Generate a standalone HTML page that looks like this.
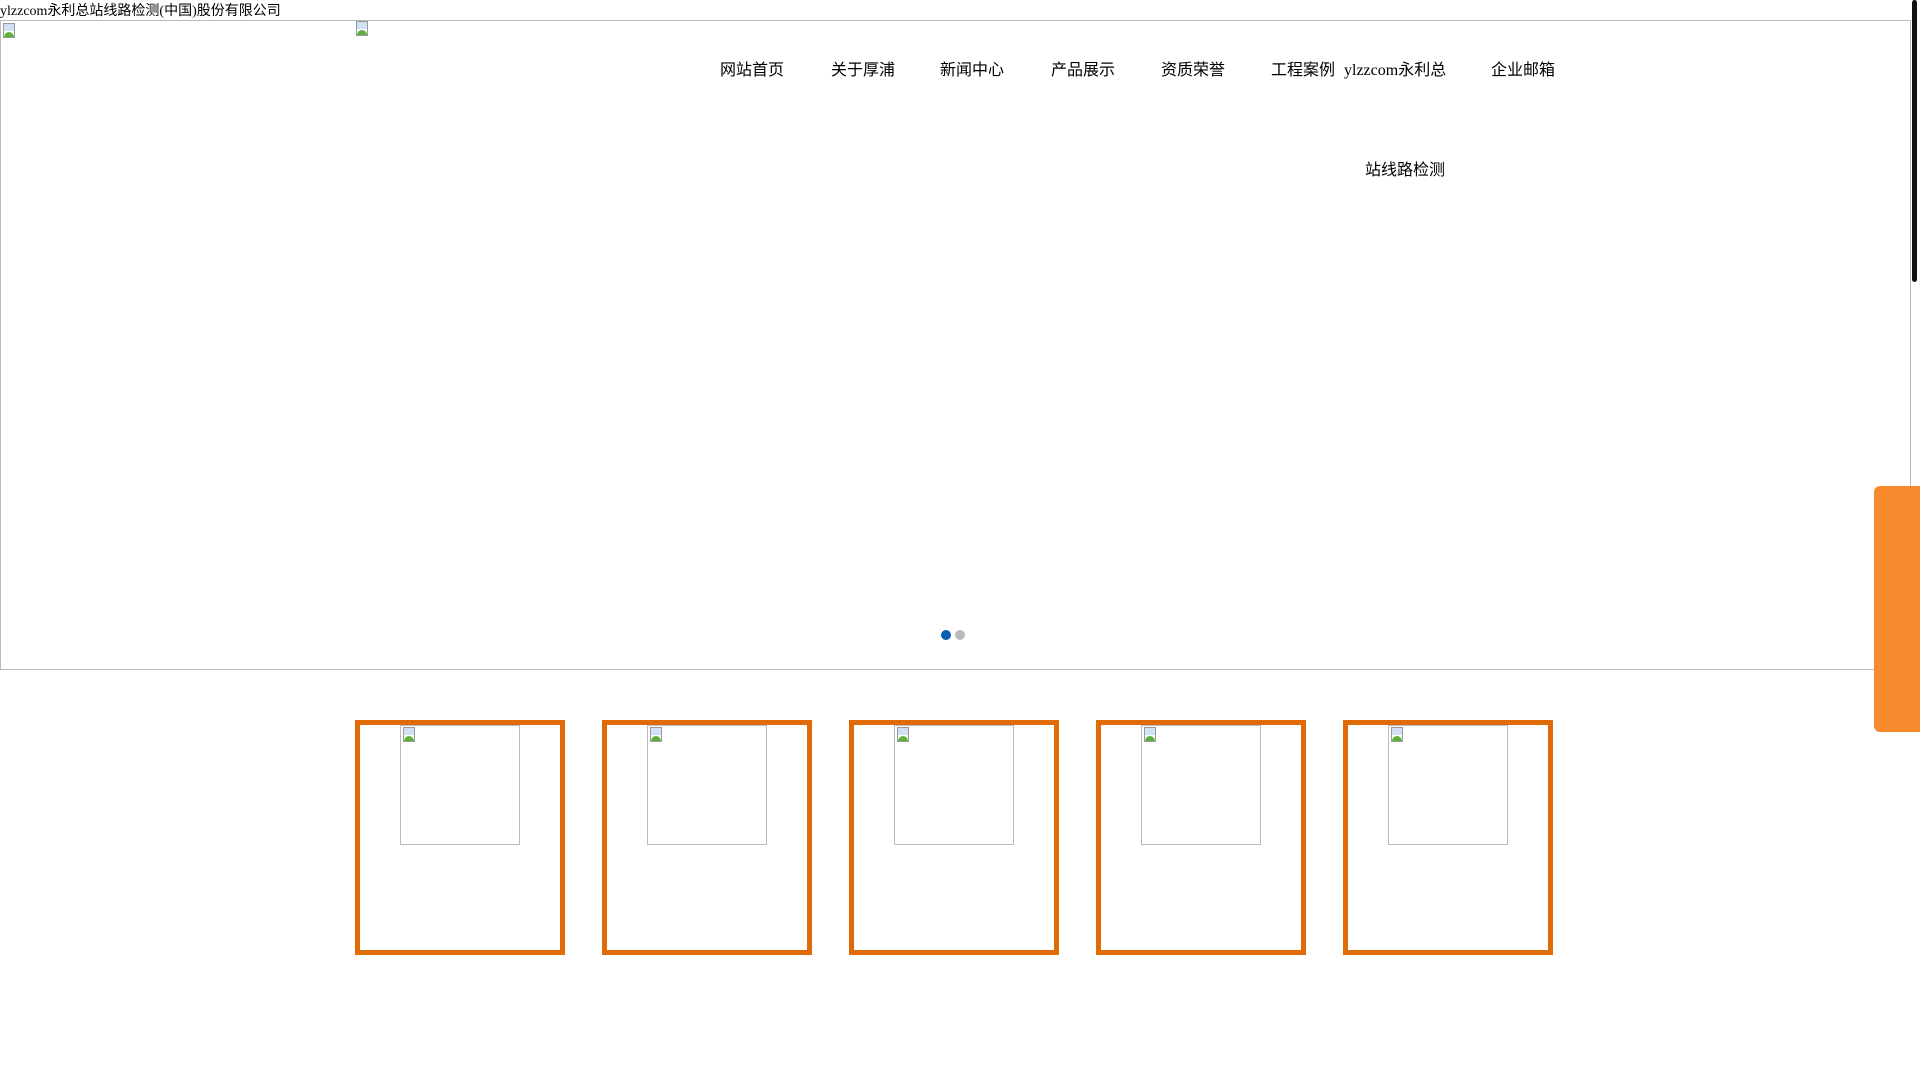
<!DOCTYPE html>
<html><head><meta charset="utf-8"><style>
*{margin:0;padding:0;box-sizing:border-box}
body{width:1920px;height:1080px;background:#fff;position:relative;overflow:hidden;font-family:"Liberation Serif","Noto Sans CJK SC",serif;color:#000}
.a{position:absolute}
.nav{font-size:16px;top:56px;white-space:nowrap}
.img{position:absolute;width:16px;height:16px}
.img i{position:absolute;left:1px;top:0;width:12px;height:15px;border:1px solid #999;background:linear-gradient(#cfe0f7 55%,#fff 55%)}
.img b{position:absolute;left:2px;top:9px;width:10px;height:5px;background:#5cb23a;border-radius:6px 6px 0 0}
.box{position:absolute;top:720px;width:210px;height:235px;border:5px solid #e06a05}
.inner{position:absolute;top:725px;width:120px;height:120px;border:1px solid #bbb;border-right-color:#bbb}
</style></head><body>
<div class="a" style="left:0;top:3px;font-size:14px;line-height:18px">ylzzcom永利总站线路检测(中国)股份有限公司</div>
<div class="a" style="left:0;top:20px;width:1911px;height:650px;border:1px solid #bbb"></div>
<div class="img" style="left:2px;top:23px"><i></i><b></b></div>
<div class="img" style="left:355px;top:21px"><i></i><b></b></div>
<div class="a nav" style="left:720px">网站首页</div>
<div class="a nav" style="left:831px">关于厚浦</div>
<div class="a nav" style="left:940px">新闻中心</div>
<div class="a nav" style="left:1051px">产品展示</div>
<div class="a nav" style="left:1161px">资质荣誉</div>
<div class="a nav" style="left:1271px">工程案例</div>
<div class="a nav" style="left:1344px">ylzzcom永利总</div>
<div class="a nav" style="left:1491px">企业邮箱</div>
<div class="a nav" style="left:1365px;top:156px">站线路检测</div>
<div class="a" style="left:941px;top:630px;width:10px;height:10px;border-radius:50%;background:#0a5bb5"></div>
<div class="a" style="left:955px;top:630px;width:10px;height:10px;border-radius:50%;background:#bbb"></div>
<div class="a" style="left:1874px;top:486px;width:46px;height:246px;background:#f78a2c;border-radius:6px 0 0 6px"></div>
<div class="a" style="left:1912px;top:0;width:5px;height:282px;background:#111;border-radius:3px"></div>

<div class="box" style="left:355px"></div><div class="inner" style="left:400px"></div><div class="img" style="left:402px;top:727px"><i></i><b></b></div>
<div class="box" style="left:602px"></div><div class="inner" style="left:647px"></div><div class="img" style="left:649px;top:727px"><i></i><b></b></div>
<div class="box" style="left:849px"></div><div class="inner" style="left:894px"></div><div class="img" style="left:896px;top:727px"><i></i><b></b></div>
<div class="box" style="left:1096px"></div><div class="inner" style="left:1141px"></div><div class="img" style="left:1143px;top:727px"><i></i><b></b></div>
<div class="box" style="left:1343px"></div><div class="inner" style="left:1388px"></div><div class="img" style="left:1390px;top:727px"><i></i><b></b></div>
</body></html>
